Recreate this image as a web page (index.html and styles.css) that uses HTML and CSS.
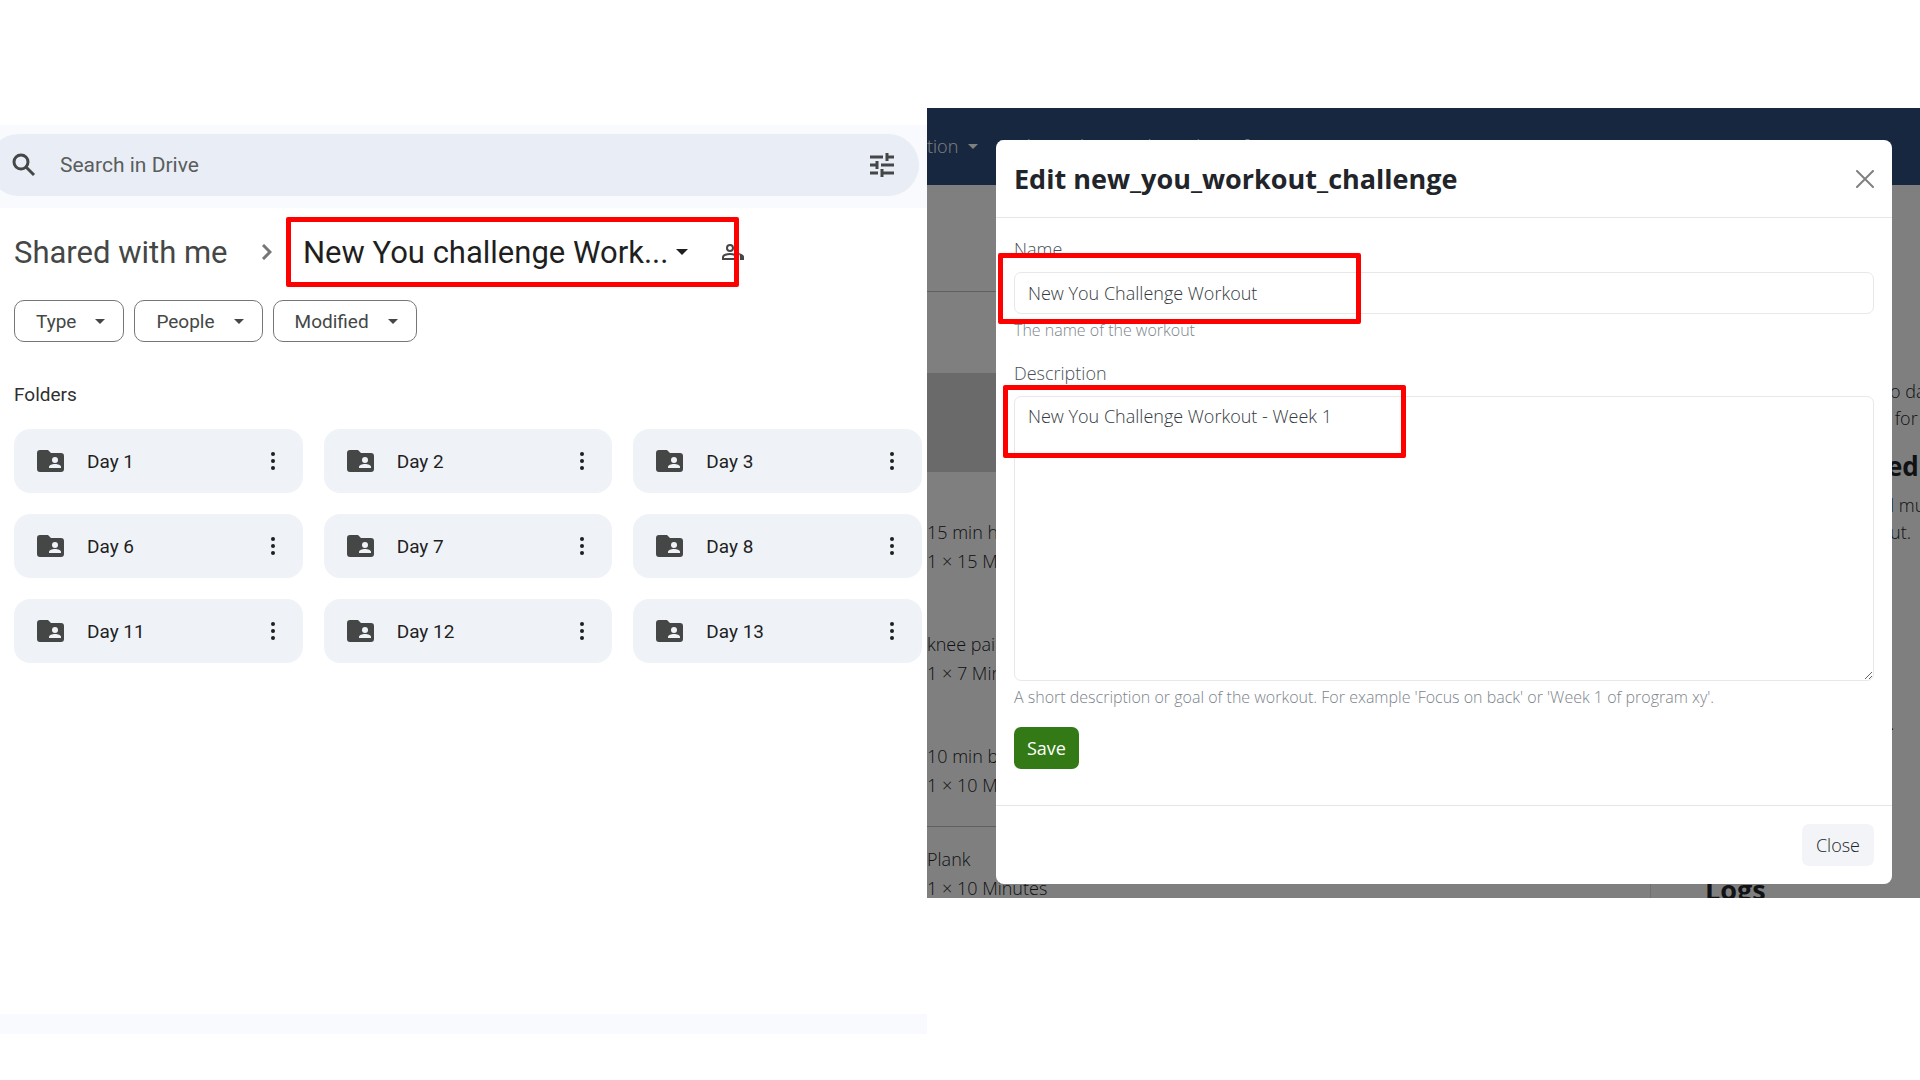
FILE: index.html
```html
<!DOCTYPE html>
<html lang="en">
<head>
<meta charset="utf-8">
<title>Workout challenge</title>
<link rel="stylesheet" href="styles.css">
</head>
<body>
<svg class="sprite" aria-hidden="true">
  <symbol id="folder" viewBox="0 0 27 22"><path fill="currentColor" d="M3 0h8l3 3h10a3 3 0 0 1 3 3v13a3 3 0 0 1-3 3H3a3 3 0 0 1-3-3V3a3 3 0 0 1 3-3z"/><circle cx="18" cy="10" r="3" fill="#eff3f8"/><path fill="#eff3f8" d="M12 18v-1c0-2 3-3 6-3s6 1 6 3v1z"/></symbol>
  <symbol id="dots" viewBox="0 0 6 20"><g fill="currentColor"><circle cx="3" cy="3" r="2"/><circle cx="3" cy="10" r="2"/><circle cx="3" cy="17" r="2"/></g></symbol>
  <symbol id="caret" viewBox="0 0 12 6"><path fill="currentColor" d="M0 0h12L6 6z"/></symbol>
</svg>
<main class="split">
  <section class="drive">
    <div class="drive-top">
      <form class="search">
        <svg class="search-icon" viewBox="0 0 24 24"><circle cx="9" cy="9" r="7" fill="none" stroke="currentColor" stroke-width="3"/><path d="M14 14l8 8" stroke="currentColor" stroke-width="3"/></svg>
        <input class="search-input" type="text" placeholder="Search in Drive" aria-label="Search in Drive">
        <svg class="tune" viewBox="0 0 24 24"><path fill="none" stroke="currentColor" stroke-width="3" d="M0 4h13M17 4h7M17 0v8M0 12h8M11 12h13M7 8v8M0 20h8M12 20h12M12 16v8"/></svg>
      </form>
    </div>
    <div class="drive-body">
      <nav class="crumbs">
        <a class="crumb" href="#">Shared with me</a>
        <svg class="chevron" viewBox="0 0 10 16"><path d="M1 1l7 7-7 7" fill="none" stroke="currentColor" stroke-width="3"/></svg>
        <div class="current"><button class="crumb-button">New You challenge Work... <svg class="caret"><use href="#caret"/></svg></button></div>
        <svg class="people" viewBox="0 0 22 17"><circle cx="8" cy="4" r="3" fill="none" stroke="currentColor" stroke-width="2"/><path d="M1 15v-2c0-2 4-3 7-3s7 1 7 3v2z" fill="none" stroke="currentColor" stroke-width="2"/><path d="M16 9c4 1 6 2 6 4v3h-4v-3c0-2-1-3-2-4z" fill="currentColor"/></svg>
      </nav>
      <div class="chips">
        <button class="chip">Type <svg class="caret-small"><use href="#caret"/></svg></button>
        <button class="chip">People <svg class="caret-small"><use href="#caret"/></svg></button>
        <button class="chip">Modified <svg class="caret-small"><use href="#caret"/></svg></button>
      </div>
      <h2 class="folders-title">Folders</h2>
      <div class="folders">
        <div class="folder"><svg class="folder-icon"><use href="#folder"/></svg><span class="folder-name">Day 1</span><svg class="dots"><use href="#dots"/></svg></div>
        <div class="folder"><svg class="folder-icon"><use href="#folder"/></svg><span class="folder-name">Day 2</span><svg class="dots"><use href="#dots"/></svg></div>
        <div class="folder"><svg class="folder-icon"><use href="#folder"/></svg><span class="folder-name">Day 3</span><svg class="dots"><use href="#dots"/></svg></div>
        <div class="folder"><svg class="folder-icon"><use href="#folder"/></svg><span class="folder-name">Day 6</span><svg class="dots"><use href="#dots"/></svg></div>
        <div class="folder"><svg class="folder-icon"><use href="#folder"/></svg><span class="folder-name">Day 7</span><svg class="dots"><use href="#dots"/></svg></div>
        <div class="folder"><svg class="folder-icon"><use href="#folder"/></svg><span class="folder-name">Day 8</span><svg class="dots"><use href="#dots"/></svg></div>
        <div class="folder"><svg class="folder-icon"><use href="#folder"/></svg><span class="folder-name">Day 11</span><svg class="dots"><use href="#dots"/></svg></div>
        <div class="folder"><svg class="folder-icon"><use href="#folder"/></svg><span class="folder-name">Day 12</span><svg class="dots"><use href="#dots"/></svg></div>
        <div class="folder"><svg class="folder-icon"><use href="#folder"/></svg><span class="folder-name">Day 13</span><svg class="dots"><use href="#dots"/></svg></div>
      </div>
    </div>
    <div class="drive-bottom"></div>
  </section>

  <section class="app">
    <header class="navbar">
      <a class="nav-link" href="#">tion <svg class="caret-small"><use href="#caret"/></svg></a>
      <a class="nav-link" href="#">Body weight <svg class="caret-small"><use href="#caret"/></svg></a>
      <a class="nav-link" href="#">About this software</a>
    </header>
    <div class="page">
      <div class="exercises">
        <div class="page-head"></div>
        <div class="day-gap"></div>
        <div class="day-band"></div>
        <div class="exercise first">15 min h<br>1 × 15 Minutes</div>
        <div class="exercise">knee pain<br>1 × 7 Minutes</div>
        <div class="exercise">10 min b<br>1 × 10 Minutes</div>
        <div class="exercise last">Plank<br>1 × 10 Minutes</div>
      </div>
      <aside class="side">
        <p class="side-text">o da<br>&nbsp;for</p>
        <h3 class="side-title">ed</h3>
        <p class="side-text">l mu<br>ut.</p>
        <p class="side-end">.</p>
        <h3 class="logs">Logs</h3>
      </aside>
    </div>
    <div class="backdrop">
      <div class="modal" role="dialog" aria-labelledby="modal-title">
        <div class="modal-header">
          <h1 class="modal-title" id="modal-title">Edit new_you_workout_challenge</h1>
          <button class="x" aria-label="Dismiss"><svg class="x-icon" viewBox="0 0 18 18"><path d="M1 1l16 16M17 1L1 17" stroke="currentColor" stroke-width="2" stroke-linecap="round"/></svg></button>
        </div>
        <form class="modal-body">
          <div class="field">
            <label class="label" for="name">Name</label>
            <input class="control" id="name" type="text" value="New You Challenge Workout">
            <small class="help">The name of the workout</small>
            <span class="mark mark-name"></span>
          </div>
          <div class="field">
            <label class="label" for="description">Description</label>
            <textarea class="control area" id="description">New You Challenge Workout - Week 1</textarea>
            <small class="help">A short description or goal of the workout. For example 'Focus on back' or 'Week 1 of program xy'.</small>
            <span class="mark mark-description"></span>
          </div>
          <button class="button save" type="submit">Save</button>
        </form>
        <div class="modal-footer"><button class="button close">Close</button></div>
      </div>
    </div>
  </section>
</main>
</body>
</html>
```
FILE: styles.css
```css
* { box-sizing: border-box; }
body { margin: 0; background: #fff; }
button, input, textarea { font: inherit; color: inherit; }
button { cursor: pointer; }
svg { flex: none; display: block; }
.sprite { display: none; }

.split { display: grid; grid-template-columns: 927fr 993fr; align-items: start; min-height: 100vh; padding-top: 108px; }

/* Drive */
.drive { padding-top: 17px; font-family: Roboto, "Liberation Sans", sans-serif; color: #444746; min-width: 0; }
.drive-top { background: #f8fafd; padding: 9px 8px 12px 0; }
.search { display: flex; align-items: center; height: 62px; margin-left: -12px; padding: 0 25px 0 24px; border-radius: 31px; background: #e9eef6; }
.search-icon { width: 24px; height: 24px; }
.search-input { flex: 1; min-width: 0; margin-left: 24px; padding: 0; border: 0; background: none; font-size: 21px; outline: 0; }
.search-input::placeholder { color: #5a5d5c; opacity: 1; }
.tune { width: 24px; height: 24px; }
.drive-body { padding: 9px 5px 0 14px; min-height: 806px; }
.crumbs { display: flex; align-items: center; font-size: 31px; white-space: nowrap; }
.crumb { color: #444746; text-decoration: none; width: 248px; }
.chevron { width: 10px; height: 16px; color: #747775; }
.current { width: 453px; height: 70px; margin-left: 14px; border: 5px solid #f00; border-radius: 2px; display: flex; align-items: center; }
.crumb-button { display: flex; align-items: center; gap: 8px; padding: 0 0 0 12px; border: 0; background: none; color: #1f1f1f; }
.caret { width: 12px; height: 6px; }
.people { width: 22px; height: 17px; margin-left: -17px; position: relative; z-index: -1; }
.chips { display: flex; gap: 10px; margin-top: 13px; }
.chip { display: flex; align-items: center; justify-content: space-between; gap: 19px; height: 42px; padding: 0 18px 0 21px; border: 1px solid #747775; border-radius: 10px; background: #fff; font-size: 19px; }
.caret-small { width: 10px; height: 5px; }
.folders-title { margin: 41px 0 0; font-size: 19px; line-height: 24px; font-weight: 400; color: #303030; }
.folders { display: grid; grid-template-columns: repeat(3, 1fr); gap: 21px; margin-top: 22px; }
.folder { display: flex; align-items: center; height: 64px; padding: 0 27px 0 23px; border-radius: 16px; background: #eff3f8; color: #444746; }
.folder-icon { width: 27px; height: 22px; }
.folder-name { flex: 1; margin-left: 23px; font-size: 19px; color: #1f1f1f; }
.dots { width: 6px; height: 20px; color: #1f1f1f; }
.drive-bottom { height: 20px; background: #f8fafd; }

/* Workout app */
.app { position: relative; overflow: hidden; height: 790px; background: #fff; font-family: "Open Sans", "Liberation Sans", sans-serif; font-weight: 300; font-size: 18px; line-height: 29px; color: #212529; }
.navbar { display: flex; gap: 20px; height: 77px; align-items: center; background: #2e4e7e; white-space: nowrap; }
.nav-link { display: flex; align-items: center; gap: 10px; color: #fff; text-decoration: none; }
.page { display: flex; justify-content: space-between; }
.exercises { flex: 1; height: 713px; border-right: 1px solid #dee2e6; }
.page-head { height: 107px; border-bottom: 1px solid #c0c0c0; }
.day-gap { height: 81px; }
.day-band { height: 99px; background: #d4d4d4; }
.exercise { height: 112px; white-space: nowrap; }
.first { margin-top: 46px; }
.last { border-top: 1px solid #c0c0c0; margin-top: -28px; padding-top: 18px; }
.side { width: 269px; padding-top: 193px; line-height: 27px; }
.side-text { margin: 0 0 0 239px; white-space: nowrap; }
.side-title { margin: 21px 0 12px 236px; font-size: 26px; line-height: 27px; font-weight: 700; }
.side-end { margin: 164px 0 0 239px; }
.logs { margin: 137px 0 0 54px; font-size: 27px; line-height: 32px; }

/* Edit dialog */
.backdrop { position: absolute; inset: 0; padding: 32px 28px 0 69px; background: rgba(0, 0, 0, .5); }
.modal { background: #fff; border-radius: 8px; }
.modal-header { display: flex; align-items: center; justify-content: space-between; height: 78px; padding: 0 18px; border-bottom: 1px solid #e4e6e8; }
.modal-title { margin: 0; font-size: 27px; line-height: 32px; font-weight: 700; }
.x { padding: 0; border: 0; background: none; color: #808080; }
.x-icon { width: 18px; height: 18px; }
.modal-body { padding: 18px 18px 36px; border-bottom: 1px solid #e4e6e8; }
.field { position: relative; margin-bottom: 18px; }
.label { display: block; line-height: 26px; margin-bottom: 10px; color: #495057; }
.control { display: block; width: 100%; height: 42px; padding: 6px 13px; border: 1px solid #e6e8ea; border-radius: 7px; background: #fff; line-height: 26px; outline: 0; color: #343a40; }
.area { height: 285px; resize: both; }
.help { display: block; margin-top: 4px; font-size: 16px; line-height: 24px; color: #7c848b; }
.button { height: 42px; padding: 0 13px; border: 0; border-radius: 7px; }
.save { background: #337a16; color: #fff; font-weight: 400; }
.close { padding: 0 14px; background: #f3f4f7; }
.modal-footer { display: flex; justify-content: flex-end; padding: 18px; }
.mark { position: absolute; border: 5px solid #f00; border-radius: 2px; pointer-events: none; }
.mark-name { left: -16px; top: 17px; width: 363px; height: 71px; }
.mark-description { left: -11px; top: 25px; width: 403px; height: 73px; }
```
